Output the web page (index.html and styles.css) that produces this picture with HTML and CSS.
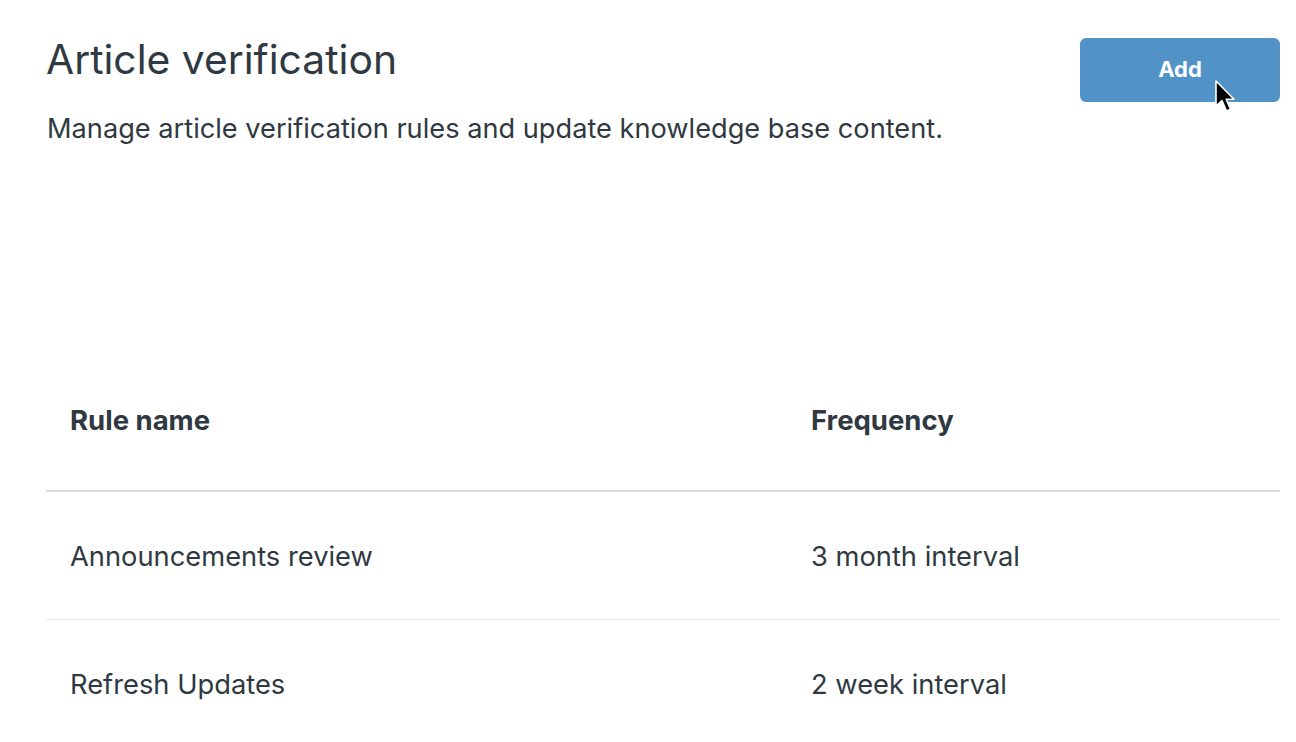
FILE: index.html
```html
<!DOCTYPE html>
<html>
<head>
<meta charset="utf-8">
<link rel="stylesheet" href="styles.css">
</head>
<body>
<div class="page">
  <header class="head">
    <div class="intro">
      <h1 class="title">Article verification</h1>
      <p class="desc">Manage article verification rules and update knowledge base content.</p>
    </div>
    <button class="add-btn">Add
      <svg class="cursor" width="22" height="34" viewBox="0 0 22 34"><path d="M2 1 L2 26 L8 20.5 L12.5 31 L16.5 29.3 L12.2 19.2 L20 19.2 Z" fill="#000" stroke="#fff" stroke-width="1.6" stroke-linejoin="round"/></svg>
    </button>
  </header>
  <table class="rules">
    <thead>
      <tr><th class="c1">Rule name</th><th class="c2">Frequency</th></tr>
    </thead>
    <tbody>
      <tr><td>Announcements review</td><td>3 month interval</td></tr>
      <tr><td>Refresh Updates</td><td>2 week interval</td></tr>
    </tbody>
  </table>
</div>
</body>
</html>
```
FILE: styles.css
```css
html, body { margin: 0; padding: 0; background: #fff; }
body { font-family: Inter, "Liberation Sans", Arial, sans-serif; color: #2f3941; }
.page { padding: 34px 16px 0 46px; }
.head { display: flex; justify-content: space-between; align-items: flex-start; }
.title { margin: 0; font-size: 40.8px; font-weight: 400; line-height: 50px; }
.desc { margin: 29px 0 0 1px; font-size: 27.2px; line-height: 32px; }
.add-btn { position: relative; margin-top: 4px; width: 200px; height: 64px; border: 0; border-radius: 6px; background: #5293c7; color: #fff; font-family: inherit; font-size: 22px; font-weight: 700; padding: 0 0 2px; }
.cursor { position: absolute; left: 134px; top: 42px; }
.rules { width: 100%; border-collapse: collapse; margin-top: 204px; }
.rules th, .rules td { text-align: left; padding: 0 0 0 24px; font-size: 27.3px; }
.rules th { font-weight: 700; font-size: 27.5px; height: 141px; vertical-align: middle; border-bottom: 2px solid #d8dcde; }
.rules td { height: 125px; padding-top: 2px; border-bottom: 1px solid #e9ebed; }
.rules .c1 { width: 717px; }
```
